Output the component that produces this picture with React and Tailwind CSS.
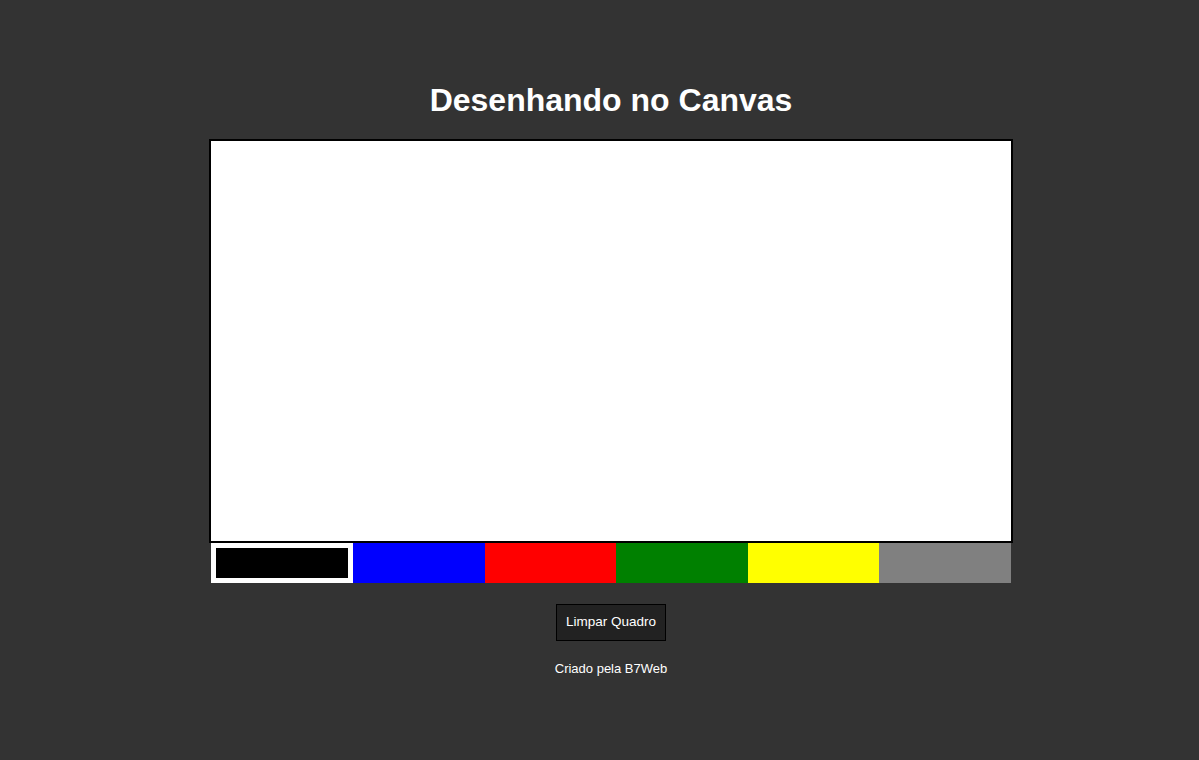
import React, { useState } from "react";

const colors = ["#000000", "#0000ff", "#ff0000", "#008000", "#ffff00", "#808080"];

const App = () => {
  const [active, setActive] = useState("#000000");

  return (
    <div
      className="min-h-screen bg-[#333333] flex flex-col items-center pt-[80px] pl-[23px] text-white"
      style={{ fontFamily: '"Liberation Sans", Arial, sans-serif' }}
    >
      <h1 className="text-[32px] leading-[40px] font-bold">Desenhando no Canvas</h1>

      <div className="mt-[19px] w-[804px] h-[404px] bg-white border-2 border-black"></div>

      <div className="flex w-[800px] h-[40px]">
        {colors.map((c) => (
          <div
            key={c}
            onClick={() => setActive(c)}
            className={
              c === active
                ? "w-[142px] h-full border-[5px] border-white cursor-pointer"
                : "flex-1 h-full cursor-pointer"
            }
            style={{ backgroundColor: c }}
          ></div>
        ))}
      </div>

      <button className="mt-[21px] w-[110px] h-[37px] bg-[#222222] border border-black text-[13.5px] text-white">
        Limpar Quadro
      </button>

      <p className="mt-[20px] text-[13px] leading-[15px]">Criado pela B7Web</p>
    </div>
  );
};

export default App;
